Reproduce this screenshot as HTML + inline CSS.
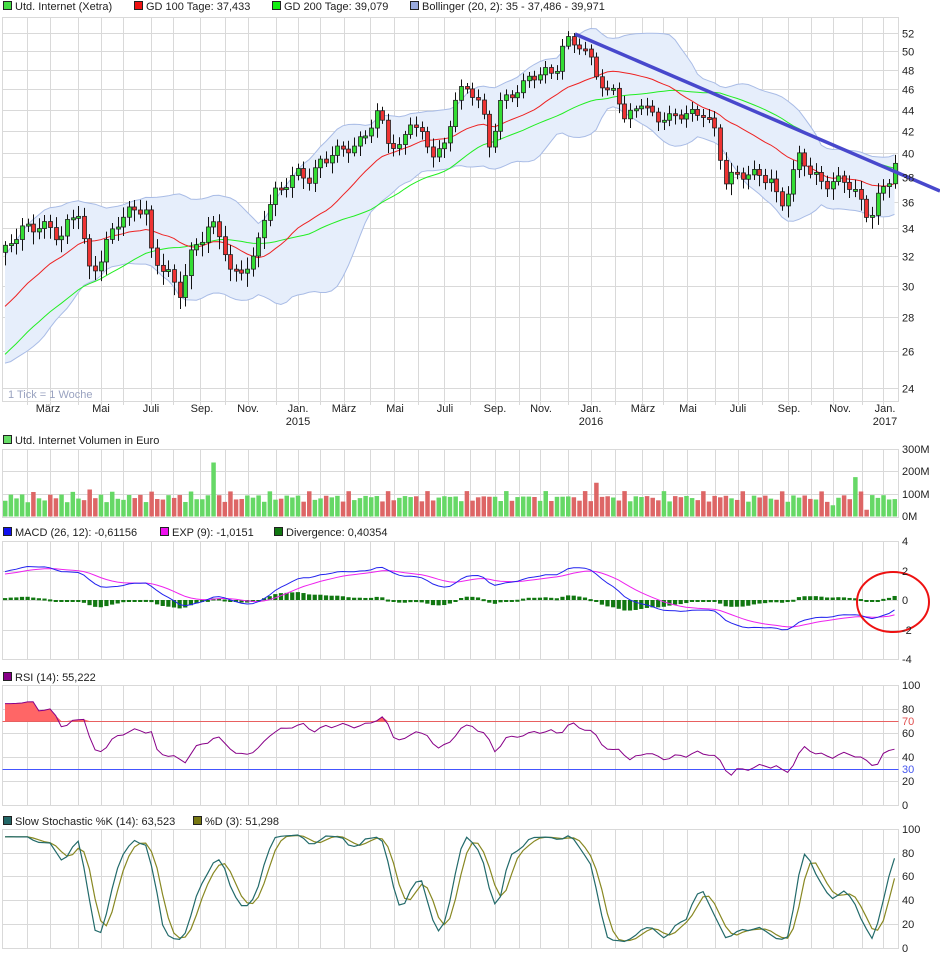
<!DOCTYPE html>
<html><head><meta charset="utf-8">
<style>
html,body{margin:0;padding:0;background:#fff;width:940px;height:958px;overflow:hidden}
svg{display:block;font-family:"Liberation Sans",sans-serif;font-size:11px}
</style></head><body>
<svg id="s" width="940" height="958" viewBox="0 0 940 958" xmlns="http://www.w3.org/2000/svg">
<g id="grid" stroke="#d9d9d9" stroke-width="1" fill="none"></g>
<g id="plots"></g>
<g fill="#222">
<rect x="3.5" y="1.5" width="8" height="8" fill="#44dd44" stroke="#222"/><text x="15" y="10">Utd. Internet (Xetra)</text>
<rect x="134.5" y="1.5" width="8" height="8" fill="#ee1111" stroke="#222"/><text x="146" y="10">GD 100 Tage: 37,433</text>
<rect x="272.5" y="1.5" width="8" height="8" fill="#11ee11" stroke="#222"/><text x="284" y="10">GD 200 Tage: 39,079</text>
<rect x="410.5" y="1.5" width="8" height="8" fill="#99aadd" stroke="#222"/><text x="422" y="10">Bollinger (20, 2): 35 - 37,486 - 39,971</text>
<rect x="3.5" y="435.5" width="8" height="8" fill="#66dd66" stroke="#222"/><text x="15" y="444">Utd. Internet Volumen in Euro</text>
<rect x="3.5" y="527.5" width="8" height="8" fill="#1111ee" stroke="#222"/><text x="15" y="536">MACD (26, 12): -0,61156</text>
<rect x="160.5" y="527.5" width="8" height="8" fill="#ee11ee" stroke="#222"/><text x="172" y="536">EXP (9): -1,0151</text>
<rect x="274.5" y="527.5" width="8" height="8" fill="#117711" stroke="#222"/><text x="286" y="536">Divergence: 0,40354</text>
<rect x="3.5" y="672.5" width="8" height="8" fill="#880088" stroke="#222"/><text x="15" y="681">RSI (14): 55,222</text>
<rect x="3.5" y="816.5" width="8" height="8" fill="#226666" stroke="#222"/><text x="15" y="825">Slow Stochastic %K (14): 63,523</text>
<rect x="193.5" y="816.5" width="8" height="8" fill="#777711" stroke="#222"/><text x="205" y="825">%D (3): 51,298</text>
<g text-anchor="middle">
<text x="48" y="412">März</text><text x="101" y="412">Mai</text><text x="151" y="412">Juli</text><text x="202" y="412">Sep.</text><text x="248" y="412">Nov.</text><text x="298" y="412">Jan.</text><text x="298" y="425">2015</text><text x="344" y="412">März</text><text x="395" y="412">Mai</text><text x="445" y="412">Juli</text><text x="495" y="412">Sep.</text><text x="541" y="412">Nov.</text><text x="591" y="412">Jan.</text><text x="591" y="425">2016</text><text x="643" y="412">März</text><text x="688" y="412">Mai</text><text x="738" y="412">Juli</text><text x="789" y="412">Sep.</text><text x="840" y="412">Nov.</text><text x="885" y="412">Jan.</text><text x="885" y="425">2017</text>
</g>
<text x="8" y="398" fill="#9aa3c0">1 Tick = 1 Woche</text>
<g id="ylab"></g>
<g>
<text x="902" y="453">300M</text><text x="902" y="475">200M</text><text x="902" y="498">100M</text><text x="902" y="520">0M</text>
<text x="902" y="545">4</text><text x="902" y="575">2</text><text x="902" y="604">0</text><text x="902" y="634">-2</text><text x="902" y="663">-4</text>
<text x="902" y="689">100</text><text x="902" y="713">80</text><text x="902" y="725" fill="#e05050">70</text><text x="902" y="737">60</text><text x="902" y="761">40</text><text x="902" y="773" fill="#4455ee">30</text><text x="902" y="785">20</text><text x="902" y="809">0</text>
<text x="902" y="833">100</text><text x="902" y="857">80</text><text x="902" y="880">60</text><text x="902" y="904">40</text><text x="902" y="928">20</text><text x="902" y="952">0</text>
</g>
</g>
</svg>
<script>
var NS="http://www.w3.org/2000/svg";
function el(p,t,a){var e=document.createElementNS(NS,t);for(var k in a)e.setAttribute(k,a[k]);p.appendChild(e);return e;}
var G=document.getElementById('grid'),P=document.getElementById('plots'),YL=document.getElementById('ylab');
var L=2.5,R=898.5;
var vx=[27,50,78,101,123,151,173,200,225,248,276,298,320,344,370,394,418,444,470,495,519,540,568,591,615,642,663,687,715,738,762,788,811,833,862,883];
var panels=[[17,401],[449,517],[541,659],[685,805],[829,948]];
panels.forEach(function(p){
  el(G,'rect',{x:L,y:p[0]+.5,width:R-L,height:p[1]-p[0]});
  vx.forEach(function(x){el(G,'line',{x1:x+.5,y1:p[0],x2:x+.5,y2:p[1]+(p[0]==17?4:0)});});
});
function ym(v){return 1847.7-459.3*Math.log(v);}
for(var v=24;v<=52;v+=2){var y=Math.round(ym(v))+.5;el(G,'line',{x1:L,y1:y,x2:R,y2:y});var t=el(YL,'text',{x:902,y:y+4});t.textContent=v;}
[471,494].forEach(function(y){el(G,'line',{x1:L,y1:y+.5,x2:R,y2:y+.5});});
[571,600,630].forEach(function(y){el(G,'line',{x1:L,y1:y+.5,x2:R,y2:y+.5});});
[709,733,757,781].forEach(function(y){el(G,'line',{x1:L,y1:y+.5,x2:R,y2:y+.5});});
[853,876,900,924].forEach(function(y){el(G,'line',{x1:L,y1:y+.5,x2:R,y2:y+.5});});
var K=[[5,32],[20,34],[40,34.5],[60,33],[78,35.5],[90,31],[101,32],[120,34.5],[135,35.5],[145,36],[152,32],[165,31],[178,29],[190,32],[200,33.5],[210,34.5],[222,33],[232,30],[240,31],[255,32],[262,35],[275,36.5],[290,37.5],[300,38.5],[310,38],[320,39.5],[340,40],[355,40.5],[365,42],[378,44],[390,40.5],[400,40],[410,43],[420,42],[435,40],[445,40.5],[457,45.5],[470,46],[480,45],[490,40.5],[500,44.5],[510,45],[520,46],[530,47.5],[545,48],[555,47.5],[565,51],[580,50.5],[590,49.5],[600,47],[605,45.5],[615,46],[625,42.5],[640,45],[655,43.5],[670,43],[690,43.5],[705,44],[715,42],[725,37.5],[740,38],[760,38.5],[770,38],[780,35.5],[790,37],[800,40],[810,38.5],[820,38],[830,37.5],[845,37.5],[860,36],[870,35],[880,37],[890,38],[895,39]];
function interp(x){for(var i=0;i<K.length-1;i++){if(x<=K[i+1][0]){var a=K[i],b=K[i+1];return a[1]+(b[1]-a[1])*(x-a[0])/(b[0]-a[0]);}}return K[K.length-1][1];}
var step=5.63,xs=[],C=[];
for(var x=5;x<=896;x+=step){xs.push(x);var i=xs.length;C.push(interp(x)+0.45*Math.sin(i*1.7)+0.3*Math.sin(i*0.63+1));}
var N=C.length;
var pre=[];for(var i=0;i<40;i++)pre.push(20+11*i/39+0.4*Math.sin(i*1.3));
var A=pre.concat(C);
function sma(n,j){var s=0;for(var k=j-n+1;k<=j;k++)s+=A[k];return s/n;}
function sd(n,j,m){var s=0;for(var k=j-n+1;k<=j;k++)s+=(A[k]-m)*(A[k]-m);return Math.sqrt(s/n);}
var up=[],lo=[],m20=[],m40=[];
for(var i=0;i<N;i++){var j=i+40;var m=sma(20,j);var d=sd(20,j,m);d=Math.max(d*1.3,m*0.045);up.push(m+2*d*0.72);lo.push(m-2*d*0.72);m20.push(m);m40.push(sma(40,j));}
function pts(arr,f){return arr.map(function(v,i){return xs[i].toFixed(1)+','+f(v).toFixed(1);}).join(' ');}
var band=pts(up,ym)+' '+lo.map(function(v,i){return xs[i].toFixed(1)+','+ym(v).toFixed(1);}).reverse().join(' ');
el(P,'polygon',{points:band,fill:'#e6eefb',stroke:'none'});
el(P,'polyline',{points:pts(up,ym),fill:'none',stroke:'#a9bce6','stroke-width':1});
el(P,'polyline',{points:pts(lo,ym),fill:'none',stroke:'#a9bce6','stroke-width':1});
el(P,'polyline',{points:pts(m40,ym),fill:'none',stroke:'#22ee22','stroke-width':1});
el(P,'polyline',{points:pts(m20,ym),fill:'none',stroke:'#ee2222','stroke-width':1});
for(var i=0;i<N;i++){var o=i?C[i-1]:C[0]-0.5,c=C[i];var h=Math.max(o,c)+0.3+0.5*Math.abs(Math.sin(i*2.3)),l=Math.min(o,c)-0.3-0.6*Math.abs(Math.cos(i*1.9));
 var x=Math.round(xs[i])+.5;el(P,'line',{x1:x,y1:ym(h),x2:x,y2:ym(l),stroke:'#111','stroke-width':1});
 var t=ym(Math.max(o,c)),b=ym(Math.min(o,c));if(b-t<2)b=t+2;
 el(P,'rect',{x:x-2,y:t,width:4,height:b-t,fill:c>=o?'#33dd33':'#ee3333',stroke:'#222','stroke-width':0.8});}
el(P,'line',{x1:575,y1:34,x2:940,y2:191,stroke:'#4848cc','stroke-width':3.5});
for(var i=0;i<N;i++){var vol=70+25*Math.abs(Math.sin(i*0.9))+18*Math.sin(i*2.7);if(i==37)vol=240;if(i==15)vol=120;if(i==105)vol=150;if(i==151)vol=175;if(i==147)vol=50;if(i==153)vol=30;
 var h=vol*0.225;el(P,'rect',{x:xs[i]-2,y:516.5-h,width:4.5,height:h,fill:(C[i]>=(i?C[i-1]:0))?'#66d866':'#dd6666'});}
function ema(arr,n){var k=2/(n+1),r=[],e=arr[0];arr.forEach(function(v){e=v*k+e*(1-k);r.push(e);});return r;}
var e12=ema(A,12),e26=ema(A,26),mac=e12.map(function(v,i){return v-e26[i];}),sig=ema(mac,9);
mac=mac.slice(40);sig=sig.slice(40);
var my=function(v){return 600-v*14.75;};
for(var i=0;i<N;i++){var d=(mac[i]-sig[i])*14.75*0.8;el(P,'rect',{x:xs[i]-2,y:d>0?600-d:600,width:4.2,height:Math.max(Math.abs(d),2),fill:'#117711'});}
el(P,'polyline',{points:pts(sig,my),fill:'none',stroke:'#ee22ee','stroke-width':1});
el(P,'polyline',{points:pts(mac,my),fill:'none',stroke:'#2222ee','stroke-width':1});
el(P,'ellipse',{cx:893,cy:602,rx:36,ry:30,fill:'none',stroke:'#ee1111','stroke-width':2});
var g=0,ls=0,rsi=[];for(var j=1;j<A.length;j++){var d=A[j]-A[j-1];g=(g*13+Math.max(d,0))/14;ls=(ls*13+Math.max(-d,0))/14;if(j>=40)rsi.push(100-100/(1+g/(ls||1e-9)));}
rsi.unshift(rsi[0]);rsi=rsi.slice(0,N).map(function(v){return v*0.85+6;});
var ry=function(v){return 805-v*1.2;};
var rp=rsi.map(function(v,i){return xs[i].toFixed(1)+','+ry(Math.max(v,70)).toFixed(1);}).join(' ');
el(P,'polygon',{points:xs[0]+','+ry(70)+' '+rp+' '+xs[N-1]+','+ry(70),fill:'#ff6666'});
el(P,'line',{x1:L,y1:721.5,x2:R,y2:721.5,stroke:'#e86060'});
el(P,'line',{x1:L,y1:769.5,x2:R,y2:769.5,stroke:'#4455ff'});
el(P,'polyline',{points:pts(rsi,ry),fill:'none',stroke:'#880088','stroke-width':1});
var fk=[];for(var i=0;i<N;i++){var j=i+40,hh=-1e9,ll=1e9;for(var k=j-13;k<=j;k++){hh=Math.max(hh,A[k]+0.4);ll=Math.min(ll,A[k]-0.4);}fk.push(100*(A[j]-ll)/(hh-ll));}
function sm(a,n){return a.map(function(v,i){var s=0,c=0;for(var k=Math.max(0,i-n+1);k<=i;k++){s+=a[k];c++;}return s/c;});}
var sk=sm(fk,3),sdd=sm(sk,3);var sy=function(v){return 948-v*1.19;};
el(P,'polyline',{points:pts(sdd,sy),fill:'none',stroke:'#888822','stroke-width':1.2});
el(P,'polyline',{points:pts(sk,sy),fill:'none',stroke:'#226a6a','stroke-width':1.2});
</script>
</body></html>
